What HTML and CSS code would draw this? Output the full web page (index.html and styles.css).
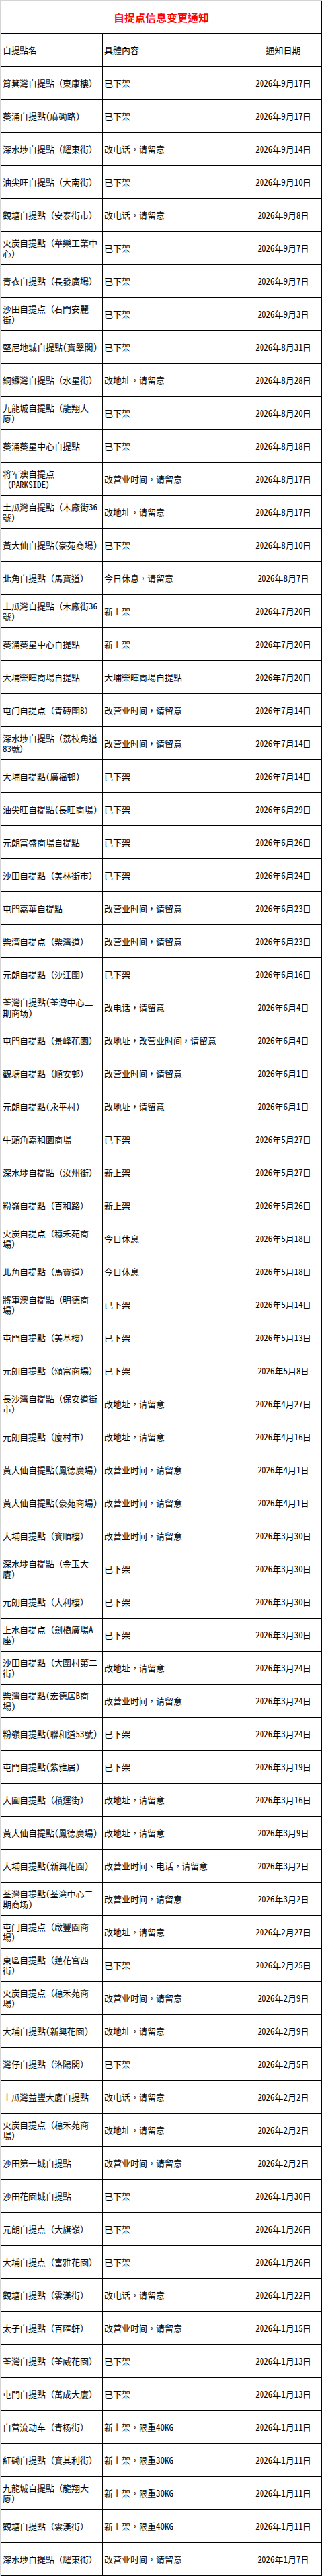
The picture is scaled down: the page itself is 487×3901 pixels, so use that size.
FILE: index.html
```html
<!DOCTYPE html>
<html lang="zh-Hant">
<head>
<meta charset="utf-8">
<title>自提点信息变更通知</title>
<link rel="stylesheet" href="styles.css">
</head>
<body>
<div class="sheet">
  <div class="grid">
    <div class="title">自提点信息变更通知</div>
    <div class="row head"><div class="cell">自提點名</div><div class="cell">具體內容</div><div class="cell date">通知日期</div></div>
    <div class="row"><div class="cell">筲箕灣自提點（東康樓）</div><div class="cell">已下架</div><div class="cell date">2026年9月17日</div></div>
    <div class="row"><div class="cell">葵涌自提點(麻磡路)</div><div class="cell">已下架</div><div class="cell date">2026年9月17日</div></div>
    <div class="row"><div class="cell">深水埗自提點（耀東街）</div><div class="cell">改电话，请留意</div><div class="cell date">2026年9月14日</div></div>
    <div class="row"><div class="cell">油尖旺自提點（大南街）</div><div class="cell">已下架</div><div class="cell date">2026年9月10日</div></div>
    <div class="row"><div class="cell">觀塘自提點（安泰街市）</div><div class="cell">改电话，请留意</div><div class="cell date">2026年9月8日</div></div>
    <div class="row"><div class="cell">火炭自提點（華樂工業中心）</div><div class="cell">已下架</div><div class="cell date">2026年9月7日</div></div>
    <div class="row"><div class="cell">青衣自提點（長發廣場）</div><div class="cell">已下架</div><div class="cell date">2026年9月7日</div></div>
    <div class="row"><div class="cell">沙田自提点（石門安麗街）</div><div class="cell">已下架</div><div class="cell date">2026年9月3日</div></div>
    <div class="row"><div class="cell">堅尼地城自提點(寶翠閣)</div><div class="cell">已下架</div><div class="cell date">2026年8月31日</div></div>
    <div class="row"><div class="cell">銅鑼灣自提點（水星街）</div><div class="cell">改地址，请留意</div><div class="cell date">2026年8月28日</div></div>
    <div class="row"><div class="cell">九龍城自提點（龍翔大廈）</div><div class="cell">已下架</div><div class="cell date">2026年8月20日</div></div>
    <div class="row"><div class="cell">葵涌葵星中心自提點</div><div class="cell">已下架</div><div class="cell date">2026年8月18日</div></div>
    <div class="row"><div class="cell">将军澳自提点（PARKSIDE）</div><div class="cell">改营业时间，请留意</div><div class="cell date">2026年8月17日</div></div>
    <div class="row"><div class="cell">土瓜灣自提點（木廠街36號）</div><div class="cell">改地址，请留意</div><div class="cell date">2026年8月17日</div></div>
    <div class="row"><div class="cell">黃大仙自提點(豪苑商場)</div><div class="cell">已下架</div><div class="cell date">2026年8月10日</div></div>
    <div class="row"><div class="cell">北角自提點（馬寶道）</div><div class="cell">今日休息，请留意</div><div class="cell date">2026年8月7日</div></div>
    <div class="row"><div class="cell">土瓜灣自提點（木廠街36號）</div><div class="cell">新上架</div><div class="cell date">2026年7月20日</div></div>
    <div class="row"><div class="cell">葵涌葵星中心自提點</div><div class="cell">新上架</div><div class="cell date">2026年7月20日</div></div>
    <div class="row"><div class="cell">大埔榮暉商場自提點</div><div class="cell">大埔榮暉商場自提點</div><div class="cell date">2026年7月20日</div></div>
    <div class="row"><div class="cell">屯门自提点（青磚圍B）</div><div class="cell">改营业时间，请留意</div><div class="cell date">2026年7月14日</div></div>
    <div class="row"><div class="cell">深水埗自提點（荔枝角道83號）</div><div class="cell">改营业时间，请留意</div><div class="cell date">2026年7月14日</div></div>
    <div class="row"><div class="cell">大埔自提點(廣福邨)</div><div class="cell">已下架</div><div class="cell date">2026年7月14日</div></div>
    <div class="row"><div class="cell">油尖旺自提點(長旺商場)</div><div class="cell">已下架</div><div class="cell date">2026年6月29日</div></div>
    <div class="row"><div class="cell">元朗富盛商場自提點</div><div class="cell">已下架</div><div class="cell date">2026年6月26日</div></div>
    <div class="row"><div class="cell">沙田自提點（美林街市）</div><div class="cell">已下架</div><div class="cell date">2026年6月24日</div></div>
    <div class="row"><div class="cell">屯門嘉華自提點</div><div class="cell">改营业时间，请留意</div><div class="cell date">2026年6月23日</div></div>
    <div class="row"><div class="cell">柴湾自提点（柴灣道）</div><div class="cell">改营业时间，请留意</div><div class="cell date">2026年6月23日</div></div>
    <div class="row"><div class="cell">元朗自提點（沙江圍）</div><div class="cell">已下架</div><div class="cell date">2026年6月16日</div></div>
    <div class="row"><div class="cell">荃灣自提點(荃湾中心二期商场)</div><div class="cell">改电话，请留意</div><div class="cell date">2026年6月4日</div></div>
    <div class="row"><div class="cell">屯門自提點（景峰花園）</div><div class="cell">改地址，改营业时间，请留意</div><div class="cell date">2026年6月4日</div></div>
    <div class="row"><div class="cell">觀塘自提點（順安邨）</div><div class="cell">改营业时间，请留意</div><div class="cell date">2026年6月1日</div></div>
    <div class="row"><div class="cell">元朗自提點(永平村)</div><div class="cell">改地址，请留意</div><div class="cell date">2026年6月1日</div></div>
    <div class="row"><div class="cell">牛頭角嘉和園商場</div><div class="cell">已下架</div><div class="cell date">2026年5月27日</div></div>
    <div class="row"><div class="cell">深水埗自提點（汝州街）</div><div class="cell">新上架</div><div class="cell date">2026年5月27日</div></div>
    <div class="row"><div class="cell">粉嶺自提點（百和路）</div><div class="cell">新上架</div><div class="cell date">2026年5月26日</div></div>
    <div class="row"><div class="cell">火炭自提点（穗禾苑商場）</div><div class="cell">今日休息</div><div class="cell date">2026年5月18日</div></div>
    <div class="row"><div class="cell">北角自提點（馬寶道）</div><div class="cell">今日休息</div><div class="cell date">2026年5月18日</div></div>
    <div class="row"><div class="cell">將軍澳自提點（明德商場）</div><div class="cell">已下架</div><div class="cell date">2026年5月14日</div></div>
    <div class="row"><div class="cell">屯門自提點（美基樓）</div><div class="cell">已下架</div><div class="cell date">2026年5月13日</div></div>
    <div class="row"><div class="cell">元朗自提點（頌富商場）</div><div class="cell">已下架</div><div class="cell date">2026年5月8日</div></div>
    <div class="row"><div class="cell">長沙灣自提點（保安道街市）</div><div class="cell">改地址，请留意</div><div class="cell date">2026年4月27日</div></div>
    <div class="row"><div class="cell">元朗自提點（廈村市）</div><div class="cell">改地址，请留意</div><div class="cell date">2026年4月16日</div></div>
    <div class="row"><div class="cell">黃大仙自提點(鳳德廣場)</div><div class="cell">改营业时间，请留意</div><div class="cell date">2026年4月1日</div></div>
    <div class="row"><div class="cell">黃大仙自提點(豪苑商場)</div><div class="cell">改营业时间，请留意</div><div class="cell date">2026年4月1日</div></div>
    <div class="row"><div class="cell">大埔自提點（寶順樓）</div><div class="cell">改营业时间，请留意</div><div class="cell date">2026年3月30日</div></div>
    <div class="row"><div class="cell">深水埗自提點（金玉大廈）</div><div class="cell">已下架</div><div class="cell date">2026年3月30日</div></div>
    <div class="row"><div class="cell">元朗自提點（大利樓）</div><div class="cell">已下架</div><div class="cell date">2026年3月30日</div></div>
    <div class="row"><div class="cell">上水自提点（劍橋廣場A座）</div><div class="cell">已下架</div><div class="cell date">2026年3月30日</div></div>
    <div class="row"><div class="cell">沙田自提點（大圍村第二街）</div><div class="cell">改地址，请留意</div><div class="cell date">2026年3月24日</div></div>
    <div class="row"><div class="cell">柴灣自提點(宏德居B商場)</div><div class="cell">改营业时间，请留意</div><div class="cell date">2026年3月24日</div></div>
    <div class="row"><div class="cell">粉嶺自提點(聯和道53號)</div><div class="cell">已下架</div><div class="cell date">2026年3月24日</div></div>
    <div class="row"><div class="cell">屯門自提點(紫雅居)</div><div class="cell">已下架</div><div class="cell date">2026年3月19日</div></div>
    <div class="row"><div class="cell">大圍自提點（積運街）</div><div class="cell">改地址，请留意</div><div class="cell date">2026年3月16日</div></div>
    <div class="row"><div class="cell">黃大仙自提點(鳳德廣場)</div><div class="cell">改地址，请留意</div><div class="cell date">2026年3月9日</div></div>
    <div class="row"><div class="cell">大埔自提點(新興花園)</div><div class="cell">改营业时间、电话，请留意</div><div class="cell date">2026年3月2日</div></div>
    <div class="row"><div class="cell">荃灣自提點(荃湾中心二期商场)</div><div class="cell">改营业时间，请留意</div><div class="cell date">2026年3月2日</div></div>
    <div class="row"><div class="cell">屯门自提点（啟豐園商場）</div><div class="cell">改地址，请留意</div><div class="cell date">2026年2月27日</div></div>
    <div class="row"><div class="cell">東區自提點（蓮花宮西街）</div><div class="cell">已下架</div><div class="cell date">2026年2月25日</div></div>
    <div class="row"><div class="cell">火炭自提点（穗禾苑商場）</div><div class="cell">改营业时间，请留意</div><div class="cell date">2026年2月9日</div></div>
    <div class="row"><div class="cell">大埔自提點(新興花園)</div><div class="cell">改地址，请留意</div><div class="cell date">2026年2月9日</div></div>
    <div class="row"><div class="cell">灣仔自提點（洛陽閣）</div><div class="cell">已下架</div><div class="cell date">2026年2月5日</div></div>
    <div class="row"><div class="cell">土瓜灣益豐大廈自提點</div><div class="cell">改电话，请留意</div><div class="cell date">2026年2月2日</div></div>
    <div class="row"><div class="cell">火炭自提点（穗禾苑商場）</div><div class="cell">改地址，请留意</div><div class="cell date">2026年2月2日</div></div>
    <div class="row"><div class="cell">沙田第一城自提點</div><div class="cell">改营业时间，请留意</div><div class="cell date">2026年2月2日</div></div>
    <div class="row"><div class="cell">沙田花園城自提點</div><div class="cell">已下架</div><div class="cell date">2026年1月30日</div></div>
    <div class="row"><div class="cell">元朗自提点（大旗嶺）</div><div class="cell">已下架</div><div class="cell date">2026年1月26日</div></div>
    <div class="row"><div class="cell">大埔自提点（富雅花園）</div><div class="cell">已下架</div><div class="cell date">2026年1月26日</div></div>
    <div class="row"><div class="cell">觀塘自提點（雲漢街）</div><div class="cell">改电话，请留意</div><div class="cell date">2026年1月22日</div></div>
    <div class="row"><div class="cell">太子自提點（百匯軒）</div><div class="cell">改营业时间，请留意</div><div class="cell date">2026年1月15日</div></div>
    <div class="row"><div class="cell">荃灣自提點（荃威花園）</div><div class="cell">已下架</div><div class="cell date">2026年1月13日</div></div>
    <div class="row"><div class="cell">屯門自提點（萬成大廈）</div><div class="cell">已下架</div><div class="cell date">2026年1月13日</div></div>
    <div class="row"><div class="cell">自营流动车（青杨街）</div><div class="cell">新上架，限重40KG</div><div class="cell date">2026年1月11日</div></div>
    <div class="row"><div class="cell">紅磡自提點（寶其利街）</div><div class="cell">新上架，限重30KG</div><div class="cell date">2026年1月11日</div></div>
    <div class="row"><div class="cell">九龍城自提點（龍翔大廈）</div><div class="cell">新上架，限重30KG</div><div class="cell date">2026年1月11日</div></div>
    <div class="row"><div class="cell">觀塘自提點（雲漢街）</div><div class="cell">新上架，限重40KG</div><div class="cell date">2026年1月11日</div></div>
    <div class="row"><div class="cell">深水埗自提點（耀東街）</div><div class="cell">改营业时间，请留意</div><div class="cell date">2026年1月7日</div></div>
  </div>
</div>
</body>
</html>
```

FILE: styles.css
```css
html, body {
  margin: 0;
  padding: 0;
  background: #ffffff;
}

body {
  font-family: "Noto Sans Mono CJK SC", "DejaVu Sans Mono", "Noto Sans CJK SC", monospace;
  font-size: 13px;
  color: #000000;
}

.sheet {
  width: 487px;
  box-sizing: border-box;
  border-top: 1px solid #d4d4d4;
  border-left: 1px solid #d4d4d4;
}

.grid {
  border-left: 1px solid #000000;
}

.title {
  height: 50px;
  box-sizing: border-box;
  border-right: 1px solid #000000;
  border-bottom: 1px solid #000000;
  display: flex;
  align-items: center;
  justify-content: center;
  font-family: "Noto Sans CJK SC", sans-serif;
  font-weight: bold;
  font-size: 16px;
  color: #ff0000;
}

.row {
  display: grid;
  grid-template-columns: 154px 215px 116px;
  height: 50px;
  box-sizing: border-box;
  border-bottom: 1px solid #000000;
}

.cell {
  box-sizing: border-box;
  min-width: 0;
  display: flex;
  align-items: center;
  padding: 1px 2px 0 2px;
  border-right: 1px solid #000000;
  line-height: 16px;
}

.date {
  justify-content: center;
}
```
